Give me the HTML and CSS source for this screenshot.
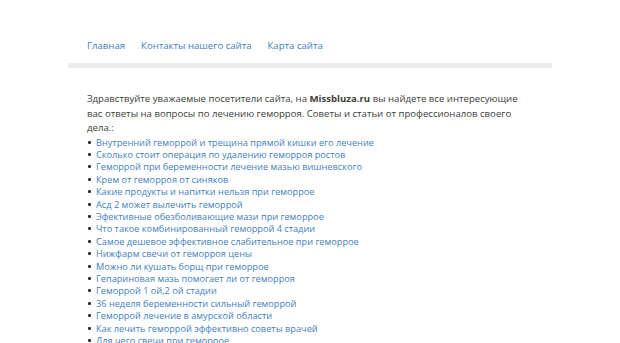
FILE: index.html
```html
<!DOCTYPE html>
<html lang="ru">
    <head>
        <meta charset="utf-8">
        <title>Missbluza.ru</title>
        <link rel="stylesheet" href="styles.css">
    </head>
    <body>
        <div class="wrap">
            <div class="nav">
                <a href="#">Главная</a>
                <a href="#">Контакты нашего сайта</a>
                <a href="#">Карта сайта</a>
            </div>
            <div class="bar"></div>
            <div class="content">
                <p>Здравствуйте уважаемые посетители сайта, на <b>Missbluza.ru</b> вы найдете все интересующие вас ответы на вопросы по лечению геморроя. Советы и статьи от профессионалов своего дела.:</p>
                <ul>
                    <li><a href="#">Внутренний геморрой и трещина прямой кишки его лечение</a></li>
                    <li><a href="#">Сколько стоит операция по удалению геморроя ростов</a></li>
                    <li><a href="#">Геморрой при беременности лечение мазью вишневского</a></li>
                    <li><a href="#">Крем от геморроя от синяков</a></li>
                    <li><a href="#">Какие продукты и напитки нельзя при геморрое</a></li>
                    <li><a href="#">Асд 2 может вылечить геморрой</a></li>
                    <li><a href="#">Эфективные обезболивающие мази при геморрое</a></li>
                    <li><a href="#">Что такое комбинированный геморрой 4 стадии</a></li>
                    <li><a href="#">Самое дешевое эффективное слабительное при геморрое</a></li>
                    <li><a href="#">Нижфарм свечи от геморроя цены</a></li>
                    <li><a href="#">Можно ли кушать борщ при геморрое</a></li>
                    <li><a href="#">Гепариновая мазь помогает ли от геморроя</a></li>
                    <li><a href="#">Геморрой 1 ой,2 ой стадии</a></li>
                    <li><a href="#">36 неделя беременности сильный геморрой</a></li>
                    <li><a href="#">Геморрой лечение в амурской области</a></li>
                    <li><a href="#">Как лечить геморрой эффективно советы врачей</a></li>
                    <li><a href="#">Для чего свечи при геморрое</a></li>
                    <li><a href="#">Лечение геморроя народными средствами</a></li>
                </ul>
            </div>
        </div>
    </body>
</html>
```

FILE: styles.css
```css
body{
    margin: 0;
    background: #fff;
    font-family: "Open Sans", "DejaVu Sans", sans-serif;
    font-size: 9.2px;
    color: #404040;
}
a{
    color: #3f7fc0;
    text-decoration: none;
}
.wrap{
    width: 484px;
    margin: 0 auto;
}
.nav{
    display: flex;
    gap: 16px;
    padding: 39px 19px 10px;
    font-size: 9.6px;
    line-height: 14px;
}
.bar{
    height: 5px;
    background: #ececec;
}
.content{
    padding: 24px 19px 0;
}
p{
    margin: 0 0 1px;
    font-size: 9.6px;
    line-height: 14.5px;
}
ul{
    list-style: none;
    margin: 0;
    padding: 0;
}
li{
    line-height: 12.4px;
}
li::before{
    content: "";
    display: inline-block;
    width: 3px;
    height: 3px;
    border-radius: 1px;
    background: #333;
    margin: 0 5px 2px 1px;
    vertical-align: middle;
}
```
